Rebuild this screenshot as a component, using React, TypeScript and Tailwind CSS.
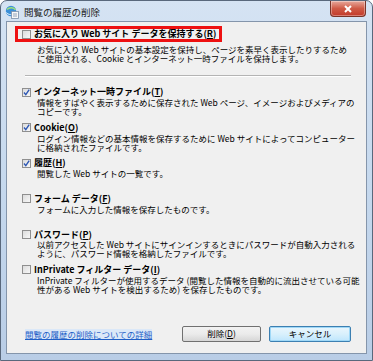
import * as React from "react"

const FONT = "[font-family:'Noto_Sans_CJK_JP','Noto_Sans',sans-serif]"

type Item = {
  label: string
  key: string
  checked: boolean
  desc: string[]
}

const ITEMS: Item[] = [
  {
    label: "インターネット一時ファイル",
    key: "T",
    checked: true,
    desc: [
      "情報をすばやく表示するために保存された Web ページ、イメージおよびメディアの",
      "コピーです。",
    ],
  },
  {
    label: "Cookie",
    key: "O",
    checked: true,
    desc: [
      "ログイン情報などの基本情報を保存するために Web サイトによってコンピューター",
      "に格納されたファイルです。",
    ],
  },
  {
    label: "履歴",
    key: "H",
    checked: true,
    desc: ["閲覧した Web サイトの一覧です。"],
  },
  {
    label: "フォーム データ",
    key: "F",
    checked: false,
    desc: ["フォームに入力した情報を保存したものです。"],
  },
  {
    label: "パスワード",
    key: "P",
    checked: false,
    desc: [
      "以前アクセスした Web サイトにサインインするときにパスワードが自動入力される",
      "ように、パスワード情報を格納したファイルです。",
    ],
  },
  {
    label: "InPrivate フィルター データ",
    key: "I",
    checked: false,
    desc: [
      "InPrivate フィルターが使用するデータ (閲覧した情報を自動的に流出させている可能",
      "性がある Web サイトを検出するため) を保存したものです。",
    ],
  },
]

function CheckBox({ checked }: { checked: boolean }) {
  return (
    <span className="relative block size-[9px] shrink-0 border border-[#8f8f8f] bg-gradient-to-br from-[#dcdcdc] to-[#f7f7f7]">
      {checked ? (
        <svg viewBox="0 0 9 9" className="absolute -left-px -top-px size-[9px]">
          <path d="M2 4.5 L3.8 6.6 L7.2 1.6" fill="none" stroke="#2d57b4" strokeWidth="1.4" />
        </svg>
      ) : null}
    </span>
  )
}

function Label({ text, k }: { text: string; k: string }) {
  return (
    <span className="whitespace-nowrap font-bold">
      {text}(<span className="underline">{k}</span>)
    </span>
  )
}

function Desc({ lines }: { lines: string[] }) {
  return (
    <div className="pl-[30px] leading-[9px]">
      {lines.map((l) => (
        <div key={l} className="whitespace-nowrap">
          {l}
        </div>
      ))}
    </div>
  )
}

function TitleIcon() {
  return (
    <svg viewBox="0 0 14 14" className="size-[14px] shrink-0">
      <circle cx="6" cy="6" r="5.2" fill="#3a8fd8" />
      <path d="M2 4.5 C4 2 9 2 10.5 5" fill="none" stroke="#9fe07a" strokeWidth="1.4" />
      <path d="M1.5 7.5 C3 10 8 10.5 10 7.5" fill="none" stroke="#e8f4ff" strokeWidth="1" />
      <rect x="6.5" y="6.5" width="7" height="7" fill="#f7f7f7" stroke="#7a8ea8" strokeWidth="0.8" />
      <path d="M8 9 h4 M8 11 h4" stroke="#7a8ea8" strokeWidth="0.8" />
    </svg>
  )
}

export default function App() {
  return (
    <div className={`${FONT} relative h-[361px] w-[373px] overflow-hidden rounded-t-[7px] border border-[#59687c] bg-gradient-to-b from-[#d5e3f3] via-[#c6d9ee] to-[#b9cde6] text-black`}>
      {/* title bar */}
      <div className="flex h-[20px] items-center gap-[5px] pl-[4px] pt-[2px]">
        <TitleIcon />
        <span className="text-[9.5px] text-[#222]">閲覧の履歴の削除</span>
      </div>
      <div className="absolute right-[6px] top-0 flex h-[16px] w-[36px] items-center justify-center rounded-b-[4px] border border-t-0 border-[#7a3428] bg-gradient-to-b from-[#e6a89c] via-[#cf5a46] to-[#c2392a] shadow-[inset_0_0_0_1px_rgba(255,255,255,0.35)]">
        <svg viewBox="0 0 10 8" className="h-[8px] w-[10px]">
          <path d="M2 1 L8 7 M8 1 L2 7" stroke="#fff" strokeWidth="2" />
        </svg>
      </div>

      {/* client */}
      <div className="mx-[5px] flex h-[333px] flex-col border border-[#8495ab] bg-[#f0f0f0] text-[8.5px]">
        <div className="ml-[8px] mt-[4px] flex h-[16px] w-[207px] items-center gap-[3px] border-[3px] border-[#ee1111] pl-[4px]">
          <CheckBox checked={false} />
          <span className="text-[9px]">
            <Label text="お気に入り Web サイト データを保持する" k="R" />
          </span>
        </div>
        <div className="mt-[3px] pl-[0px]">
          <Desc
            lines={[
              "お気に入り Web サイトの基本設定を保持し、ページを素早く表示したりするため",
              "に使用される、Cookie とインターネット一時ファイルを保持します。",
            ]}
          />
        </div>
        <div className="ml-[18px] mr-[15px] mt-[12px] h-px bg-[#b4b4b4] shadow-[0_1px_0_#fff]" />
        <div className="mt-[10px] flex flex-col">
          {ITEMS.map((it) => (
            <div key={it.key} className="h-[35.6px]">
              <div className="flex h-[12px] items-center gap-[3px] pl-[15px] text-[9px]">
                <CheckBox checked={it.checked} />
                <Label text={it.label} k={it.key} />
              </div>
              <Desc lines={it.desc} />
            </div>
          ))}
        </div>
        <div className="mt-[26px] flex items-center pl-[18px] pr-[15px]">
          <span className="whitespace-nowrap bg-[#dbe8f8] text-[8.5px] leading-[10px] text-[#1f5fc7] underline">
            閲覧の履歴の削除についての詳細
          </span>
          <div className="ml-auto flex gap-[8px]">
            <button className="flex h-[16px] w-[79px] items-center justify-center rounded-[2px] border border-[#707070] bg-gradient-to-b from-[#f2f2f2] via-[#ebebeb] to-[#d6d6d6] text-[8.5px]">
              削除(<span className="underline">D</span>)
            </button>
            <button className="flex h-[16px] w-[82px] items-center justify-center rounded-[2px] border border-[#3c7fb1] bg-gradient-to-b from-[#eaf6fd] via-[#d9f0fc] to-[#bee6fd] text-[8.5px] shadow-[inset_0_0_0_1px_#9fd8f7]">
              キャンセル
            </button>
          </div>
        </div>
      </div>
    </div>
  )
}
